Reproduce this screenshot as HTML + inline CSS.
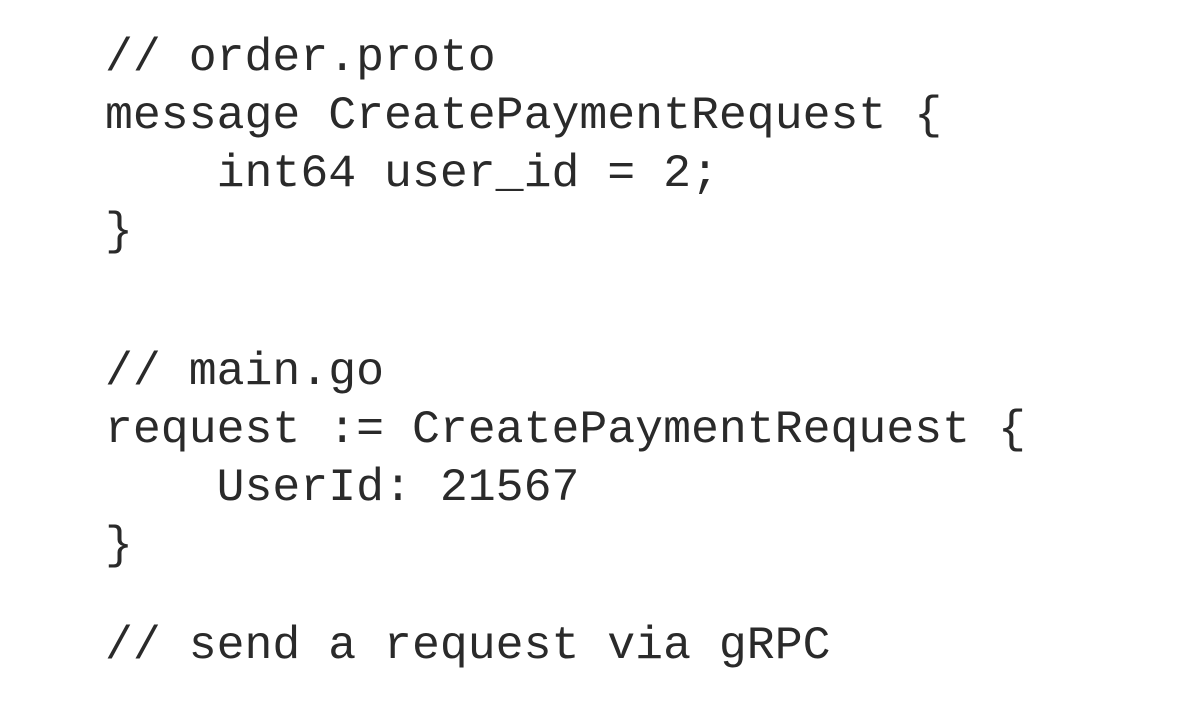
<!DOCTYPE html>
<html><head><meta charset="utf-8"><style>
html,body{margin:0;padding:0;background:#fff;width:1204px;height:704px;overflow:hidden}
.l{position:absolute;left:105px;font-family:"Liberation Mono",monospace;font-size:46.5px;line-height:58px;color:#2a2a2a;white-space:pre}
</style></head><body>
<div class="l" style="top:29px">// order.proto</div>
<div class="l" style="top:87px">message CreatePaymentRequest {</div>
<div class="l" style="top:145px">    int64 user_id = 2;</div>
<div class="l" style="top:203px">}</div>
<div class="l" style="top:343px">// main.go</div>
<div class="l" style="top:401px">request := CreatePaymentRequest {</div>
<div class="l" style="top:459px">    UserId: 21567</div>
<div class="l" style="top:517px">}</div>
<div class="l" style="top:617px">// send a request via gRPC</div>
</body></html>
